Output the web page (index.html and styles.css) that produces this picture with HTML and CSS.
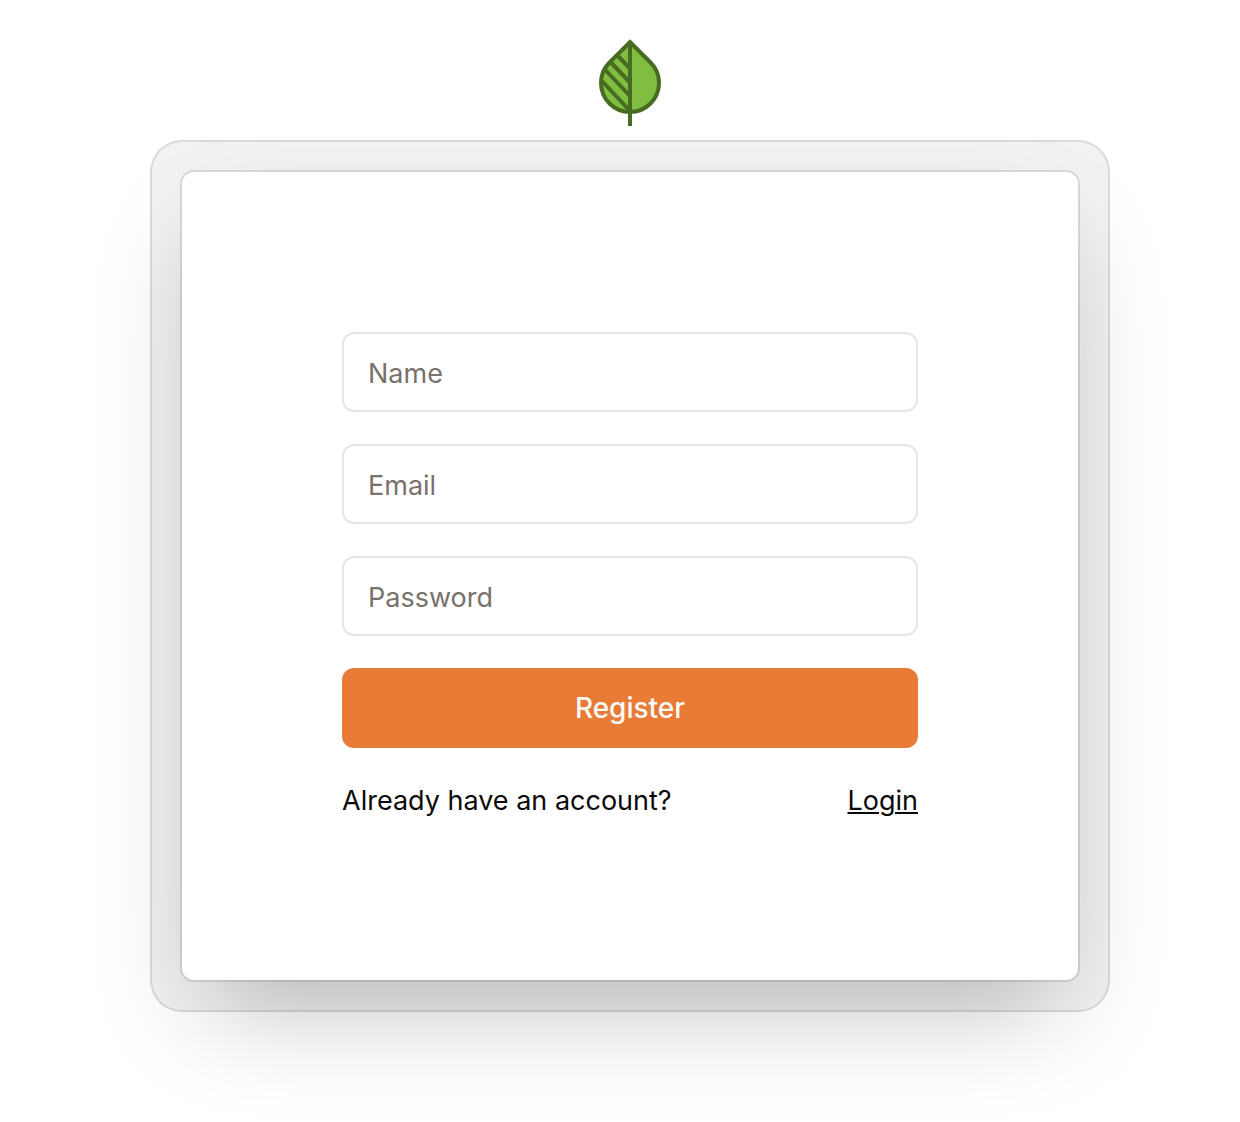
FILE: index.html
```html
<!DOCTYPE html>
<html lang="en">
<head>
  <meta charset="utf-8">
  <meta name="viewport" content="width=device-width, initial-scale=1">
  <title>Register</title>
  <link rel="stylesheet" href="styles.css">
</head>
<body>
  <main class="page">
    <svg class="logo" viewBox="0 0 64 88" role="img" aria-label="Leaf">
      <path d="M32 4 L52.5 24.5 A29 29 0 1 1 11.5 24.5 Z" fill="#80bd41" stroke="#476b21" stroke-width="4"/>
      <path d="M32 4V88M19 17L32 30.500M12 23.500L32 44.500M6 30.500L32 58M4 43L32 73" fill="none" stroke="#476b21" stroke-width="4"/>
    </svg>
    <div class="frame">
      <div class="card">
        <form class="form">
          <input class="field" type="text" placeholder="Name" aria-label="Name">
          <input class="field" type="email" placeholder="Email" aria-label="Email">
          <input class="field" type="password" placeholder="Password" aria-label="Password">
          <button class="submit" type="submit">Register</button>
          <div class="switch">
            <span>Already have an account?</span>
            <a class="link" href="#login">Login</a>
          </div>
        </form>
      </div>
    </div>
  </main>
</body>
</html>
```
FILE: styles.css
```css
*,
*::before,
*::after {
  box-sizing: border-box;
}

body {
  margin: 0;
  background: #fff;
  color: #0c0a09;
  font-family: Inter, "Liberation Sans", sans-serif;
  font-size: 27px;
  line-height: 40px;
  overflow-x: hidden;
}

.page {
  display: flex;
  flex-direction: column;
  align-items: center;
  gap: 14px;
  padding: 38px 130px 110px 150px;
}

.logo {
  display: block;
  width: 64px;
  height: 88px;
}

.frame {
  width: 100%;
  max-width: 960px;
  padding: 30px;
  border: 2px solid rgba(0, 0, 0, 0.1);
  border-radius: 32px;
  background: rgba(0, 0, 0, 0.05);
}

.card {
  padding: 160px;
  border-radius: 12px;
  background: #fff;
  box-shadow:
    0 0 0 2px rgba(0, 0, 0, 0.1),
    0 50px 100px -24px rgba(0, 0, 0, 0.25);
}

.form {
  display: flex;
  flex-direction: column;
  gap: 32px;
}

.field {
  width: 100%;
  height: 80px;
  padding: 2px 24px 0;
  border: 2px solid #e5e5e5;
  border-radius: 12px;
  background: #fff;
  color: inherit;
  font: inherit;
}

.field::placeholder {
  color: #78716c;
  opacity: 1;
}

.submit {
  height: 80px;
  padding: 0 24px;
  border: 0;
  border-radius: 12px;
  background: #e87b35;
  color: #fafaf9;
  font: inherit;
  font-size: 28px;
  font-weight: 500;
  cursor: pointer;
}

.switch {
  display: flex;
  justify-content: space-between;
  height: 40px;
  line-height: 42px;
}

.link {
  color: inherit;
  text-decoration: underline;
  text-decoration-thickness: 2px;
  text-underline-offset: 2px;
}
```
